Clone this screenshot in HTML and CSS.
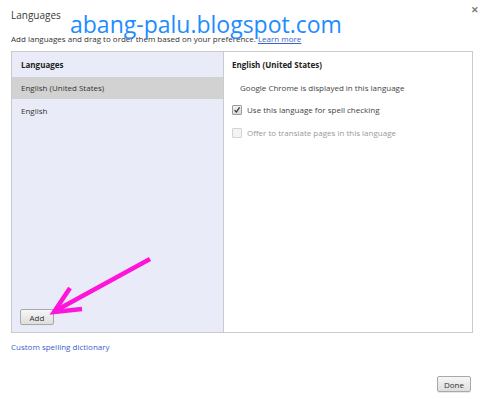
FILE: index.html
```html
<!DOCTYPE html>
<html>
<head>
<meta charset="utf-8">
<link rel="stylesheet" href="styles.css">
</head>
<body>
<div class="dialog">
  <div class="head">
    <div class="title">Languages</div>
    <div class="close">&#x2715;</div>
  </div>
  <div class="sub">Add languages and drag to order them based on your preference. <a class="link">Learn more</a></div>
  <div class="box">
    <div class="left">
      <div class="lhead">Languages</div>
      <div class="row sel">English (United States)</div>
      <div class="row">English</div>
      <div class="spacer"></div>
      <div class="lfoot"><button class="btn">Add</button></div>
    </div>
    <div class="right">
      <div class="rhead">English (United States)</div>
      <div class="info">Google Chrome is displayed in this language</div>
      <div class="check"><span class="cb on"><svg viewBox="0 0 10 10" width="10" height="10"><path d="M2 5.2 L4.2 7.6 L8.2 1.8" fill="none" stroke="#333" stroke-width="1.6"/></svg></span>Use this language for spell checking</div>
      <div class="check dis"><span class="cb"></span>Offer to translate pages in this language</div>
    </div>
  </div>
  <div class="custom"><a class="link2">Custom spelling dictionary</a></div>
  <div class="foot"><button class="btn">Done</button></div>
</div>
<div class="watermark">abang-palu.blogspot.com</div>
<svg class="arrow" width="484" height="399" viewBox="0 0 484 399">
  <g stroke="#ff14dc" stroke-width="4.5" stroke-linecap="butt" fill="none">
    <path d="M150 259 L55 311"/>
    <path d="M70 288 L54 312 L82 309"/>
  </g>
</svg>
</body>
</html>
```
FILE: styles.css
```css
html, body { margin: 0; padding: 0; background: #fff; }
body { width: 484px; height: 399px; overflow: hidden; position: relative; font-family: "Open Sans", "Liberation Sans", sans-serif; color: #333; font-size: 8px; }
.dialog { padding: 0 11px 0 11px; display: flex; flex-direction: column; height: 399px; box-sizing: border-box; }
.head { display: flex; justify-content: space-between; align-items: flex-start; height: 25px; padding-top: 8px; box-sizing: border-box; }
.title { font-size: 10px; line-height: 14px; color: #3a3a3a; }
.close { font-size: 9px; color: #777; margin-right: -6px; margin-top: -5px; font-weight: bold; }
.sub { line-height: 10px; margin-top: 9px; color: #333; }
.link { color: #3a62c9; text-decoration: underline; }
.box { margin-top: 7px; border: 1px solid #cbcbcb; height: 282px; box-sizing: border-box; display: flex; }
.left { width: 211px; background: #e9ecf8; border-right: 1px solid #cbcbcb; display: flex; flex-direction: column; }
.lhead { height: 25px; line-height: 25px; padding-left: 9px; font-weight: bold; color: #222; }
.row { height: 23px; line-height: 23px; padding-left: 9px; color: #333; }
.row.sel { background: #d2d2d2; height: 22px; line-height: 22px; }
.spacer { flex: 1; }
.lfoot { padding: 0 0 7px 8px; }
.btn { width: 34px; height: 16px; border: 1px solid #a9a9a9; border-radius: 2px; background: linear-gradient(#f6f6f6, #dedede); font-family: "Open Sans", "Liberation Sans", sans-serif; font-size: 8px; color: #333; padding: 0; box-shadow: 0 1px 0 #e8e8e8; }
.right { flex: 1; padding-left: 8px; }
.rhead { height: 25px; line-height: 25px; font-weight: bold; color: #222; }
.info { height: 21px; line-height: 21px; padding-left: 8px; color: #444; }
.check { display: flex; align-items: center; height: 23px; color: #444; }
.check.dis { color: #999; }
.cb { width: 10px; height: 10px; box-sizing: border-box; border: 1px solid #9c9c9c; border-radius: 1px; background: linear-gradient(#f0f0f0, #dadada); margin-right: 5px; display: flex; align-items: center; justify-content: center; }
.cb svg { display: block; }
.check.dis .cb { border-color: #d4d4d4; background: #f4f4f4; }
.custom { margin-top: 9px; line-height: 10px; }
.link2 { color: #3b5fc7; }
.foot { display: flex; justify-content: flex-end; margin-top: 24px; padding-right: 2px; }
.watermark { position: absolute; left: 70px; top: 8px; font-family: "Open Sans", sans-serif; font-size: 23px; color: #1e8cff; line-height: 32px; }
.arrow { position: absolute; left: 0; top: 0; }
```
